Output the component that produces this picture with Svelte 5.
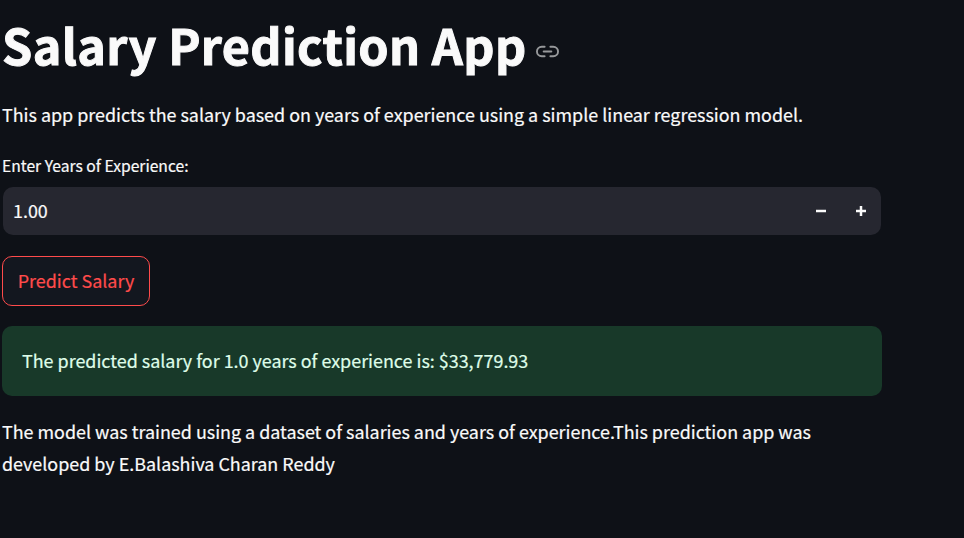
<script>
  let years = $state(1);
  const shown = $derived(years.toFixed(2));
</script>

<main>
  <header>
    <h1><span>Salary Prediction App</span></h1>
    <a href="#salary-prediction-app" aria-label="Link to heading">
      <svg width="23" height="23" viewBox="0 0 24 24" fill="none" stroke="currentColor" stroke-width="2" stroke-linecap="round" stroke-linejoin="round">
        <path d="M15 7h3a5 5 0 0 1 5 5 5 5 0 0 1-5 5h-3m-6 0H6a5 5 0 0 1-5-5 5 5 0 0 1 5-5h3" />
        <line x1="8" y1="12" x2="16" y2="12" />
      </svg>
    </a>
  </header>

  <p class="intro"><span>This app predicts the salary based on years of experience using a simple linear regression model.</span></p>

  <label for="years"><span>Enter Years of Experience:</span></label>
  <div class="number">
    <input id="years" value={shown} />
    <button class="step" aria-label="Decrease" onclick={() => (years -= 1)}>
      <svg width="20" height="20" viewBox="0 0 8 8" fill="currentColor"><path d="M0 3v2h8V3z" transform="translate(2 2) scale(.5)" /></svg>
    </button>
    <button class="step" aria-label="Increase" onclick={() => (years += 1)}>
      <svg width="20" height="20" viewBox="0 0 8 8" fill="currentColor"><path d="M3 0v3H0v2h3v3h2V5h3V3H5V0z" transform="translate(2 2) scale(.5)" /></svg>
    </button>
  </div>

  <button class="predict"><span>Predict Salary</span></button>

  <div class="success"><span>The predicted salary for 1.0 years of experience is: $33,779.93</span></div>

  <p class="about"><span>The model was trained using a dataset of salaries and years of experience.This prediction app was</span><br /><span>developed by E.Balashiva Charan Reddy</span></p>
</main>

<style>
  :global(body) {
    background: #0e1117;
  }
  main {
    box-sizing: border-box;
    width: 964px;
    height: 538px;
    padding: 0 82px 0 2px;
    overflow: hidden;
    background: #0e1117;
    color: #fafafa;
    font: 400 17.91px/32px "Noto Sans CJK SC", "Noto Sans", sans-serif;
    -webkit-text-stroke: 0.2px currentColor;
    white-space: nowrap;
  }
  h1, p {
    margin: 0;
  }
  header {
    display: flex;
    align-items: center;
    gap: 9px;
    height: 66px;
    padding-top: 11px;
  }
  h1 {
    font-size: 48.5px;
    font-weight: 700;
    line-height: 66px;
    letter-spacing: 0.37px;
    -webkit-text-stroke: 1px currentColor;
  }
  header a {
    display: flex;
    margin-top: 14px;
    color: #97999b;
  }
  .intro {
    margin-top: 21px;
  }
  label {
    display: block;
    height: 24px;
    margin-top: 24px;
    font-size: 15.67px;
    line-height: 24px;
  }
  .number {
    display: flex;
    height: 48px;
    margin: 9px 1px 0;
    overflow: hidden;
    border-radius: 10px;
    background: #262730;
  }
  button, input {
    font: inherit;
    color: inherit;
    border: 0;
    background: none;
  }
  input {
    flex: 1;
    min-width: 0;
    padding: 0 10px 2px;
    outline: none;
  }
  .step {
    display: flex;
    align-items: center;
    justify-content: center;
    width: 40px;
    padding: 0;
  }
  .predict {
    display: block;
    box-sizing: border-box;
    width: 148px;
    height: 50px;
    margin-top: 21px;
    padding: 0 0 2px;
    border: 1px solid #ff4b4b;
    border-radius: 10px;
    background: #13171f;
    color: #ff4b4b;
  }
  .success {
    height: 32px;
    margin-top: 20px;
    padding: 18px 20px 20px;
    border-radius: 10px;
    background: #183929;
    color: #dffde9;
  }
  .about {
    margin-top: 19px;
  }
</style>
